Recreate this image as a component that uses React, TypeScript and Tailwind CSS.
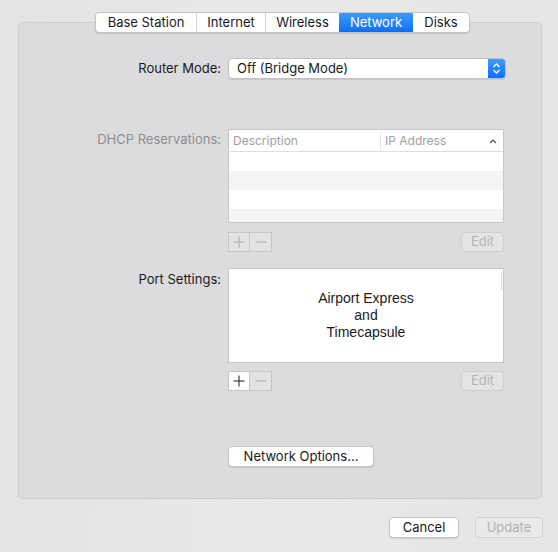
import React from 'react';

const tabs = ['Base Station', 'Internet', 'Wireless', 'Network', 'Disks'];
const tabWidths = ['w-[100px]', 'w-[69px]', 'w-[74px]', 'w-[74px]', 'w-[56px]'];

const PlusMinus: React.FC<{ plusEnabled?: boolean }> = ({ plusEnabled }) => (
  <div className="flex h-[20px]">
    <div
      className={`w-[22px] h-full flex items-center justify-center border border-[#c6c6c6] ${
        plusEnabled ? 'bg-white' : 'bg-[#e3e3e3]'
      }`}
    >
      <svg width="12" height="12" viewBox="0 0 12 12">
        <path d="M6 0.5V11.5M0.5 6H11.5" stroke={plusEnabled ? '#1a1a1a' : '#a8a8a8'} strokeWidth="1" />
      </svg>
    </div>
    <div className="w-[22px] h-full flex items-center justify-center border border-l-0 border-[#c6c6c6] bg-[#e3e3e3]">
      <svg width="12" height="12" viewBox="0 0 12 12">
        <path d="M0.5 6H11.5" stroke="#a8a8a8" strokeWidth="1" />
      </svg>
    </div>
  </div>
);

const EditButton = () => (
  <div className="w-[43px] h-[20px] rounded-[4px] border border-[#cfcfcf] bg-[#e4e4e4] flex items-center justify-center text-[13px] text-[#b4b4b4]">
    Edit
  </div>
);

export default function App() {
  return (
    <div
      className="w-[558px] h-[552px] bg-gradient-to-r from-[#e2e3e5] via-[#e8e9eb] to-[#e4e5e7] flex flex-col text-[#1a1a1a]"
      style={{ fontFamily: 'Inter, "Noto Sans", sans-serif' }}
    >
      {/* panel */}
      <div className="relative ml-[18px] mt-[22px] w-[524px] h-[477px] rounded-[5px] border border-[#cdcdcf] bg-[#dcdcde]">
        {/* segmented tabs */}
        <div className="absolute left-[76px] -top-[11px] flex h-[21px] rounded-[4px] border border-[#c4c4c4] bg-white shadow-[0_1px_1px_rgba(0,0,0,0.12)] overflow-hidden text-[13px]">
          {tabs.map((t, i) => (
            <div
              key={t}
              className={`${tabWidths[i]} flex items-center justify-center ${
                i > 0 && i !== 3 && i !== 4 ? 'border-l border-[#d4d4d4]' : ''
              } ${t === 'Network' ? 'bg-gradient-to-b from-[#3f9bfc] to-[#0c6dfb] text-white' : ''}`}
            >
              {t}
            </div>
          ))}
        </div>

        <div className="flex flex-col text-[13px]">
          {/* router mode */}
          <div className="flex items-center mt-[35px]">
            <div className="w-[202px] text-right">Router Mode:</div>
            <div className="ml-[7px] w-[278px] h-[21px] flex rounded-[4px] border border-[#c2c2c2] bg-white shadow-[0_1px_1px_rgba(0,0,0,0.1)] overflow-hidden">
              <div className="flex-1 pl-[8px] flex items-center">Off (Bridge Mode)</div>
              <div className="w-[17px] bg-gradient-to-b from-[#3f9bfc] to-[#0c6dfb] flex items-center justify-center">
                <svg width="9" height="13" viewBox="0 0 9 13">
                  <path d="M1.5 5L4.5 2L7.5 5M1.5 8L4.5 11L7.5 8" stroke="white" strokeWidth="1.3" fill="none" />
                </svg>
              </div>
            </div>
          </div>

          {/* dhcp */}
          <div className="flex mt-[50px]">
            <div className="w-[202px] text-right text-[#8e8e8e] pt-[1px]">DHCP Reservations:</div>
            <div className="ml-[7px] w-[276px] flex flex-col">
              <div className="h-[94px] border border-[#c8c8c8] bg-white flex flex-col">
                <div className="h-[22px] flex items-center text-[12px] text-[#a0a0a0] border-b border-[#dedede]">
                  <div className="w-[152px] pl-[4px] border-r border-[#e2e2e2] h-[16px] flex items-center">Description</div>
                  <div className="flex-1 pl-[4px] flex items-center justify-between pr-[6px]">
                    <span>IP Address</span>
                    <svg width="8" height="6" viewBox="0 0 8 6">
                      <path d="M1 5L4 2L7 5" stroke="#555" strokeWidth="1.2" fill="none" />
                    </svg>
                  </div>
                </div>
                <div className="h-[19px] bg-white" />
                <div className="h-[19px] bg-[#f4f4f4]" />
                <div className="h-[19px] bg-white" />
                <div className="flex-1 bg-[#f4f4f4]" />
              </div>
              <div className="flex justify-between mt-[9px]">
                <PlusMinus />
                <EditButton />
              </div>
            </div>
          </div>

          {/* port settings */}
          <div className="flex mt-[16px]">
            <div className="w-[202px] text-right pt-[2px]">Port Settings:</div>
            <div className="ml-[7px] w-[276px] flex flex-col">
              <div className="relative h-[95px] border border-[#c8c8c8] bg-white flex flex-col items-center justify-center text-[14px] leading-[17px]"
                style={{ fontFamily: '"Liberation Sans", Arial, sans-serif' }}>
                <div className="absolute right-[1px] top-[3px] w-[1px] h-[18px] bg-[#d8d8d8]" />
                <div>Airport Express</div>
                <div>and</div>
                <div>Timecapsule</div>
              </div>
              <div className="flex justify-between mt-[8px]">
                <PlusMinus plusEnabled />
                <EditButton />
              </div>
            </div>
          </div>

          {/* network options */}
          <div className="ml-[209px] mt-[55px] w-[146px] h-[21px] rounded-[4px] border border-[#c4c4c4] bg-white shadow-[0_1px_1px_rgba(0,0,0,0.1)] flex items-center justify-center">
            Network Options...
          </div>
        </div>
      </div>

      {/* bottom buttons */}
      <div className="flex justify-end gap-[16px] mt-[18px] mr-[15px] text-[13px]">
        <div className="w-[70px] h-[21px] rounded-[4px] border border-[#c4c4c4] bg-white shadow-[0_1px_1px_rgba(0,0,0,0.1)] flex items-center justify-center">
          Cancel
        </div>
        <div className="w-[68px] h-[21px] rounded-[4px] border border-[#d2d2d2] bg-[#e9e9ea] flex items-center justify-center text-[#b2b2b2]">
          Update
        </div>
      </div>
    </div>
  );
}
